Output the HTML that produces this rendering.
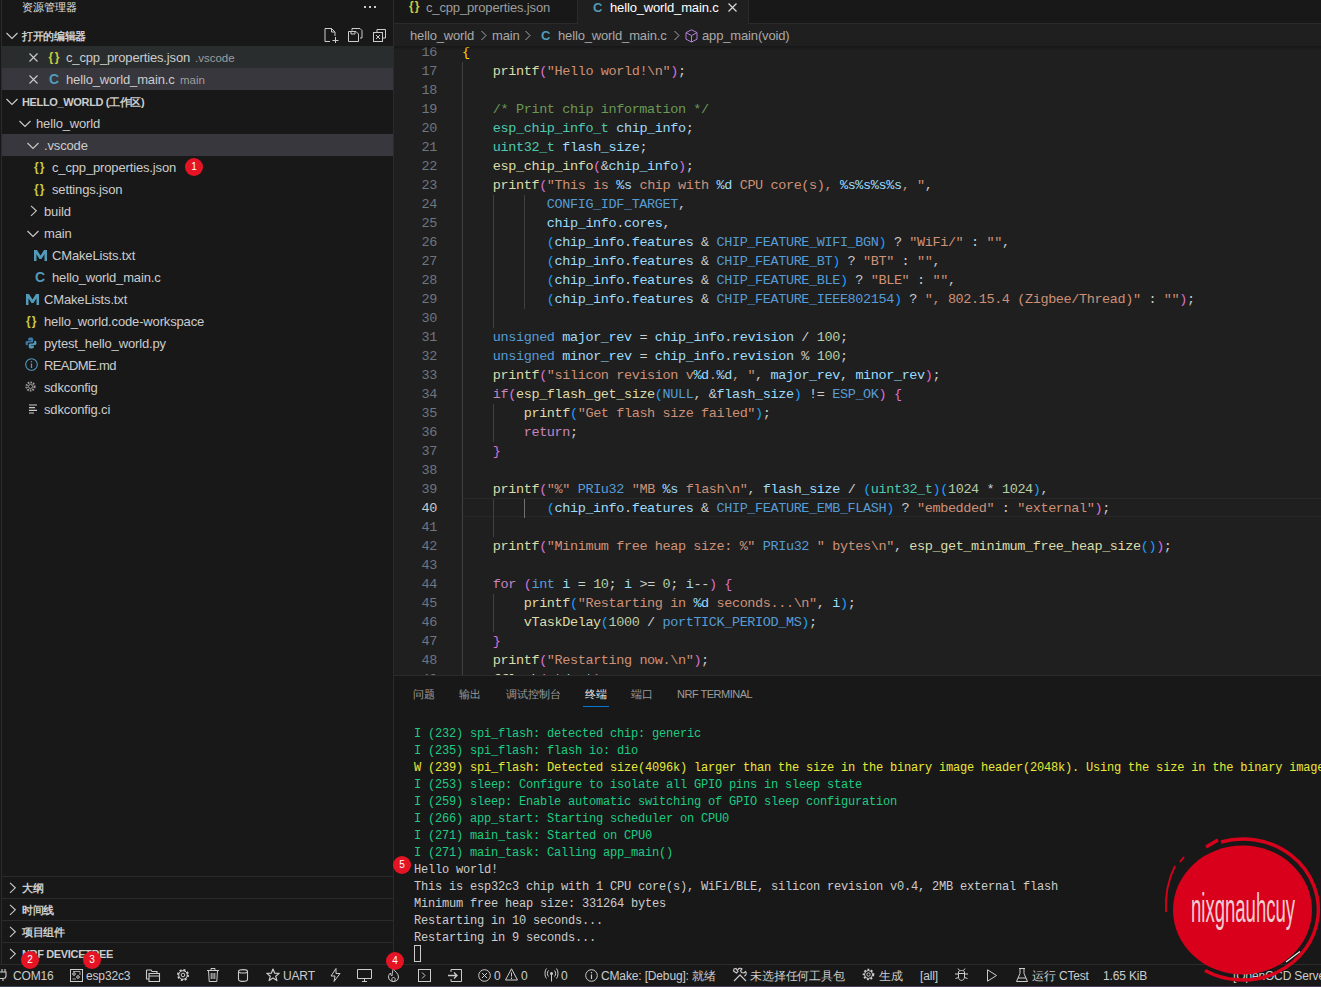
<!DOCTYPE html>
<html><head><meta charset="utf-8">
<style>
*{box-sizing:border-box;margin:0;padding:0}
html,body{width:1321px;height:987px;overflow:hidden;background:#181818}
body{position:relative;font-family:"Liberation Sans",sans-serif;color:#CCCCCC;font-size:13px}
.a{position:absolute}
.t{position:absolute;white-space:pre;line-height:22px;height:22px}
.row{position:absolute;left:2px;width:391px;height:22px}
.hdr{font-weight:bold;font-size:11px;letter-spacing:-0.35px;margin-top:1px}
.ln{position:absolute;left:394px;width:43px;text-align:right;height:19px;line-height:19px;font-family:"Liberation Mono",monospace;font-size:13.5px;letter-spacing:-0.39px}
.cl{position:absolute;left:462px;height:19px;line-height:19px;white-space:pre;font-family:"Liberation Mono",monospace;font-size:13.5px;letter-spacing:-0.39px}
.ig{position:absolute;width:1px;height:19px}
.tl{position:absolute;left:414px;height:17px;line-height:17px;white-space:pre;font-family:"Liberation Mono",monospace;font-size:12px;letter-spacing:-0.2px}
.sb{position:absolute;top:965px;height:23px;line-height:23px;font-size:12px;letter-spacing:-0.15px;white-space:pre;color:#CCCCCC}
.badge{position:absolute;width:18px;height:18px;border-radius:50%;background:#E51425;color:#fff;font-size:10px;line-height:18px;text-align:center}
svg{position:absolute;overflow:visible}
</style></head><body>

<!-- ============ SIDEBAR ============ -->
<div class="a" style="left:1px;top:0;width:1px;height:964px;background:#2B2B2B"></div>
<div class="a" style="left:393px;top:0;width:1px;height:964px;background:#2B2B2B"></div>

<div class="t" style="left:22px;top:-4px;font-size:11px;color:#E0E0E0">资源管理器</div>
<div class="a" style="left:364px;top:6px;width:2px;height:2px;background:#ccc"></div>
<div class="a" style="left:369px;top:6px;width:2px;height:2px;background:#ccc"></div>
<div class="a" style="left:374px;top:6px;width:2px;height:2px;background:#ccc"></div>

<!-- open editors header -->
<svg style="left:6px;top:32px" width="12" height="8" viewBox="0 0 12 8"><path d="M0.5 1 L6 6.5 L11.5 1" fill="none" stroke="#ccc" stroke-width="1.1"/></svg>
<div class="t hdr" style="left:22px;top:24px">打开的编辑器</div>
<!-- new file -->
<svg style="left:324px;top:28px" width="16" height="16" viewBox="0 0 16 16"><path d="M1 0.5 H7.5 L11 4 V8 M1 0.5 V13.5 H6 M7.5 0.5 V4 H11" fill="none" stroke="#ccc" stroke-width="1"/><path d="M11.5 9 V15 M8.5 12.5 H14.5" stroke="#ccc" stroke-width="1"/></svg>
<!-- save all -->
<svg style="left:348px;top:28px" width="15" height="15" viewBox="0 0 15 15"><path d="M4 2.5 V0.5 H12 L14 2.5 V10 H12" fill="none" stroke="#ccc" stroke-width="1"/><path d="M0.5 3.5 H8 L10.5 6 V13.5 H0.5 Z M3 3.5 V6 H7 V3.5" fill="none" stroke="#ccc" stroke-width="1"/></svg>
<!-- close all -->
<svg style="left:373px;top:29px" width="13" height="13" viewBox="0 0 13 13"><path d="M4 3 V0.5 H12.5 V9 H10" fill="none" stroke="#ccc" stroke-width="1"/><rect x="0.5" y="3.5" width="9" height="9" fill="none" stroke="#ccc" stroke-width="1"/><path d="M3 6 L7 10 M7 6 L3 10" stroke="#ccc" stroke-width="1"/></svg>

<div class="row" style="top:46px;background:#2A2D2E"></div>
<div class="row" style="top:68px;background:#37373D"></div>
<svg style="left:29px;top:53px" width="9" height="9" viewBox="0 0 9 9"><path d="M0.5 0.5 L8.5 8.5 M8.5 0.5 L0.5 8.5" stroke="#ccc" stroke-width="1.1"/></svg>
<svg style="left:29px;top:75px" width="9" height="9" viewBox="0 0 9 9"><path d="M0.5 0.5 L8.5 8.5 M8.5 0.5 L0.5 8.5" stroke="#ccc" stroke-width="1.1"/></svg>
<div class="t" style="left:48.5px;top:46px;font-size:12px;font-weight:bold;color:#CBCB41;letter-spacing:1.5px">{}</div>
<div class="t" style="letter-spacing:-0.15px;left:66px;top:47px">c_cpp_properties.json</div>
<div class="t" style="left:195px;top:47px;font-size:11.5px;color:#9D9D9D">.vscode</div>
<div class="t" style="left:49px;top:68px;font-size:14px;font-weight:bold;color:#519ABA">C</div>
<div class="t" style="letter-spacing:-0.15px;left:66px;top:69px">hello_world_main.c</div>
<div class="t" style="left:180px;top:69px;font-size:11.5px;color:#9D9D9D">main</div>

<!-- workspace -->
<svg style="left:6px;top:98px" width="12" height="8" viewBox="0 0 12 8"><path d="M0.5 1 L6 6.5 L11.5 1" fill="none" stroke="#ccc" stroke-width="1.1"/></svg>
<div class="t hdr" style="left:22px;top:90px">HELLO_WORLD (工作区)</div>

<svg style="left:19px;top:120px" width="12" height="8" viewBox="0 0 12 8"><path d="M0.5 1 L6 6.5 L11.5 1" fill="none" stroke="#ccc" stroke-width="1.1"/></svg>
<div class="t" style="letter-spacing:-0.15px;left:36px;top:113px">hello_world</div>

<div class="row" style="top:134px;background:#37373D"></div>
<svg style="left:27px;top:142px" width="12" height="8" viewBox="0 0 12 8"><path d="M0.5 1 L6 6.5 L11.5 1" fill="none" stroke="#ccc" stroke-width="1.1"/></svg>
<div class="t" style="letter-spacing:-0.15px;left:44px;top:135px">.vscode</div>

<div class="t" style="left:34px;top:156px;font-size:12px;font-weight:bold;color:#CBCB41;letter-spacing:1px">{}</div>
<div class="t" style="letter-spacing:-0.15px;left:52px;top:157px">c_cpp_properties.json</div>
<div class="badge" style="left:185px;top:158px">1</div>
<div class="t" style="left:34px;top:178px;font-size:12px;font-weight:bold;color:#CBCB41;letter-spacing:1px">{}</div>
<div class="t" style="letter-spacing:-0.15px;left:52px;top:179px">settings.json</div>

<svg style="left:30px;top:205px" width="8" height="12" viewBox="0 0 8 12"><path d="M1 0.8 L6.3 5.8 L1 10.8" fill="none" stroke="#ccc" stroke-width="1.1"/></svg>
<div class="t" style="letter-spacing:-0.15px;left:44px;top:201px">build</div>
<svg style="left:27px;top:230px" width="12" height="8" viewBox="0 0 12 8"><path d="M0.5 1 L6 6.5 L11.5 1" fill="none" stroke="#ccc" stroke-width="1.1"/></svg>
<div class="t" style="letter-spacing:-0.15px;left:44px;top:223px">main</div>

<svg style="left:33.5px;top:249.5px" width="13" height="11" viewBox="0 0 13 11"><path d="M0 11 V0 H3 L6.5 5.6 L10 0 H13 V11 H10.5 V4.2 L7.5 9 H5.5 L2.5 4.2 V11 Z" fill="#519ABA"/></svg>
<div class="t" style="letter-spacing:-0.15px;left:52px;top:245px">CMakeLists.txt</div>
<div class="t" style="left:35px;top:266px;font-size:14px;font-weight:bold;color:#519ABA">C</div>
<div class="t" style="letter-spacing:-0.15px;left:52px;top:267px">hello_world_main.c</div>
<svg style="left:25.5px;top:293.5px" width="13" height="11" viewBox="0 0 13 11"><path d="M0 11 V0 H3 L6.5 5.6 L10 0 H13 V11 H10.5 V4.2 L7.5 9 H5.5 L2.5 4.2 V11 Z" fill="#519ABA"/></svg>
<div class="t" style="letter-spacing:-0.15px;left:44px;top:289px">CMakeLists.txt</div>
<div class="t" style="left:26px;top:310px;font-size:12px;font-weight:bold;color:#CBCB41;letter-spacing:1px">{}</div>
<div class="t" style="letter-spacing:-0.15px;left:44px;top:311px">hello_world.code-workspace</div>
<!-- python -->
<svg style="left:25px;top:337px" width="12" height="12" viewBox="0 0 12 12"><path d="M6 0.5 C3 0.5 3.2 1.8 3.2 1.8 V3.5 H6.2 V4 H2 C2 4 0.5 3.9 0.5 6.1 C0.5 8.4 1.8 8.3 1.8 8.3 H2.8 V6.9 C2.8 6.9 2.7 5.6 4.1 5.6 H6.8 C6.8 5.6 8.2 5.6 8.2 4.3 V2 C8.2 2 8.4 0.5 6 0.5 Z" fill="#3C78AA"/><path d="M6 11.5 C9 11.5 8.8 10.2 8.8 10.2 V8.5 H5.8 V8 H10 C10 8 11.5 8.1 11.5 5.9 C11.5 3.6 10.2 3.7 10.2 3.7 H9.2 V5.1 C9.2 5.1 9.3 6.4 7.9 6.4 H5.2 C5.2 6.4 3.8 6.4 3.8 7.7 V10 C3.8 10 3.6 11.5 6 11.5 Z" fill="#519ABA"/></svg>
<div class="t" style="letter-spacing:-0.15px;left:44px;top:333px">pytest_hello_world.py</div>
<!-- info -->
<svg style="left:25px;top:358px" width="13" height="13" viewBox="0 0 13 13"><circle cx="6.5" cy="6.5" r="5.8" fill="none" stroke="#519ABA" stroke-width="1.1"/><path d="M6.5 5.5 V10 M6.5 3 V4.2" stroke="#519ABA" stroke-width="1.3"/></svg>
<div class="t" style="letter-spacing:-0.6px;left:44px;top:355px">README.md</div>
<!-- gear -->
<svg style="left:24px;top:380px" width="13" height="13" viewBox="0 0 13 13"><circle cx="6.5" cy="6.5" r="4" fill="none" stroke="#9A9A9A" stroke-width="2.2" stroke-dasharray="1.6 1"/><circle cx="6.5" cy="6.5" r="2" fill="none" stroke="#9A9A9A" stroke-width="1"/></svg>
<div class="t" style="letter-spacing:-0.15px;left:44px;top:377px">sdkconfig</div>
<!-- lines -->
<svg style="left:29px;top:404px" width="10" height="10" viewBox="0 0 10 10"><path d="M0 1 H8 M0 3.7 H6 M0 6.3 H8 M0 9 H5" stroke="#ccc" stroke-width="1.2"/></svg>
<div class="t" style="letter-spacing:-0.15px;left:44px;top:399px">sdkconfig.ci</div>

<!-- bottom sections -->
<div class="a" style="left:2px;top:876px;width:391px;height:1px;background:#2B2B2B"></div>
<div class="a" style="left:2px;top:898px;width:391px;height:1px;background:#2B2B2B"></div>
<div class="a" style="left:2px;top:920px;width:391px;height:1px;background:#2B2B2B"></div>
<div class="a" style="left:2px;top:942px;width:391px;height:1px;background:#2B2B2B"></div>
<svg style="left:9px;top:882px" width="8" height="12" viewBox="0 0 8 12"><path d="M1 0.8 L6.3 5.8 L1 10.8" fill="none" stroke="#ccc" stroke-width="1.1"/></svg>
<div class="t hdr" style="left:22px;top:876px">大纲</div>
<svg style="left:9px;top:904px" width="8" height="12" viewBox="0 0 8 12"><path d="M1 0.8 L6.3 5.8 L1 10.8" fill="none" stroke="#ccc" stroke-width="1.1"/></svg>
<div class="t hdr" style="left:22px;top:898px">时间线</div>
<svg style="left:9px;top:926px" width="8" height="12" viewBox="0 0 8 12"><path d="M1 0.8 L6.3 5.8 L1 10.8" fill="none" stroke="#ccc" stroke-width="1.1"/></svg>
<div class="t hdr" style="left:22px;top:920px">项目组件</div>
<svg style="left:9px;top:948px" width="8" height="12" viewBox="0 0 8 12"><path d="M1 0.8 L6.3 5.8 L1 10.8" fill="none" stroke="#ccc" stroke-width="1.1"/></svg>
<div class="t hdr" style="left:22px;top:942px">NRF DEVICETREE</div>

<!-- ============ EDITOR ============ -->
<div class="a" style="left:394px;top:0;width:927px;height:24px;background:#181818"></div>
<div class="a" style="left:394px;top:23px;width:927px;height:1px;background:#2B2B2B"></div>
<div class="a" style="left:577px;top:0;width:1px;height:24px;background:#2B2B2B"></div>
<div class="a" style="left:578px;top:0;width:170px;height:24px;background:#1F1F1F"></div>
<div class="a" style="left:748px;top:0;width:1px;height:24px;background:#2B2B2B"></div>
<div class="t" style="left:409px;top:-5px;font-size:12px;font-weight:bold;color:#CBCB41;letter-spacing:1px">{}</div>
<div class="t" style="letter-spacing:-0.15px;left:426px;top:-3px;color:#9D9D9D">c_cpp_properties.json</div>
<div class="t" style="left:593px;top:-3px;font-weight:bold;color:#519ABA">C</div>
<div class="t" style="letter-spacing:-0.15px;left:610px;top:-3px;color:#FFFFFF">hello_world_main.c</div>
<svg style="left:728px;top:3px" width="9" height="9" viewBox="0 0 9 9"><path d="M0.5 0.5 L8.5 8.5 M8.5 0.5 L0.5 8.5" stroke="#ddd" stroke-width="1.1"/></svg>

<!-- editor body -->
<div class="a" style="left:394px;top:46px;width:927px;height:629px;background:#1F1F1F;overflow:hidden" id="ed"></div>
<div class="a" style="left:462px;top:497.5px;width:859px;height:19px;border-top:1px solid #282828;border-bottom:1px solid #282828"></div>
<div class="ln" style="top:42.5px;color:#6E7681">16</div>
<div class="cl" style="top:42.5px"><span style="color:#FFD700">{</span></div>
<div class="ln" style="top:61.5px;color:#6E7681">17</div>
<div class="ig" style="top:61.5px;left:462.0px;background:#404040"></div>
<div class="cl" style="top:61.5px"><span style="color:#CCCCCC">    </span><span style="color:#DCDCAA">printf</span><span style="color:#DA70D6">(</span><span style="color:#CE9178">&quot;Hello world!\n&quot;</span><span style="color:#DA70D6">)</span><span style="color:#CCCCCC">;</span></div>
<div class="ln" style="top:80.5px;color:#6E7681">18</div>
<div class="ig" style="top:80.5px;left:462.0px;background:#404040"></div>
<div class="cl" style="top:80.5px"></div>
<div class="ln" style="top:99.5px;color:#6E7681">19</div>
<div class="ig" style="top:99.5px;left:462.0px;background:#404040"></div>
<div class="cl" style="top:99.5px"><span style="color:#CCCCCC">    </span><span style="color:#6A9955">/* Print chip information */</span></div>
<div class="ln" style="top:118.5px;color:#6E7681">20</div>
<div class="ig" style="top:118.5px;left:462.0px;background:#404040"></div>
<div class="cl" style="top:118.5px"><span style="color:#CCCCCC">    </span><span style="color:#4EC9B0">esp_chip_info_t</span><span style="color:#CCCCCC"> </span><span style="color:#9CDCFE">chip_info</span><span style="color:#CCCCCC">;</span></div>
<div class="ln" style="top:137.5px;color:#6E7681">21</div>
<div class="ig" style="top:137.5px;left:462.0px;background:#404040"></div>
<div class="cl" style="top:137.5px"><span style="color:#CCCCCC">    </span><span style="color:#4EC9B0">uint32_t</span><span style="color:#CCCCCC"> </span><span style="color:#9CDCFE">flash_size</span><span style="color:#CCCCCC">;</span></div>
<div class="ln" style="top:156.5px;color:#6E7681">22</div>
<div class="ig" style="top:156.5px;left:462.0px;background:#404040"></div>
<div class="cl" style="top:156.5px"><span style="color:#CCCCCC">    </span><span style="color:#DCDCAA">esp_chip_info</span><span style="color:#DA70D6">(</span><span style="color:#CCCCCC">&amp;</span><span style="color:#9CDCFE">chip_info</span><span style="color:#DA70D6">)</span><span style="color:#CCCCCC">;</span></div>
<div class="ln" style="top:175.5px;color:#6E7681">23</div>
<div class="ig" style="top:175.5px;left:462.0px;background:#404040"></div>
<div class="cl" style="top:175.5px"><span style="color:#CCCCCC">    </span><span style="color:#DCDCAA">printf</span><span style="color:#DA70D6">(</span><span style="color:#CE9178">&quot;This is </span><span style="color:#9CDCFE">%s</span><span style="color:#CE9178"> chip with </span><span style="color:#9CDCFE">%d</span><span style="color:#CE9178"> CPU core(s), </span><span style="color:#9CDCFE">%s%s%s%s</span><span style="color:#CE9178">, &quot;</span><span style="color:#CCCCCC">,</span></div>
<div class="ln" style="top:194.5px;color:#6E7681">24</div>
<div class="ig" style="top:194.5px;left:462.0px;background:#404040"></div>
<div class="ig" style="top:194.5px;left:492.8px;background:#404040"></div>
<div class="ig" style="top:194.5px;left:523.7px;background:#404040"></div>
<div class="cl" style="top:194.5px"><span style="color:#CCCCCC">           </span><span style="color:#569CD6">CONFIG_IDF_TARGET</span><span style="color:#CCCCCC">,</span></div>
<div class="ln" style="top:213.5px;color:#6E7681">25</div>
<div class="ig" style="top:213.5px;left:462.0px;background:#404040"></div>
<div class="ig" style="top:213.5px;left:492.8px;background:#404040"></div>
<div class="ig" style="top:213.5px;left:523.7px;background:#404040"></div>
<div class="cl" style="top:213.5px"><span style="color:#CCCCCC">           </span><span style="color:#9CDCFE">chip_info</span><span style="color:#CCCCCC">.</span><span style="color:#9CDCFE">cores</span><span style="color:#CCCCCC">,</span></div>
<div class="ln" style="top:232.5px;color:#6E7681">26</div>
<div class="ig" style="top:232.5px;left:462.0px;background:#404040"></div>
<div class="ig" style="top:232.5px;left:492.8px;background:#404040"></div>
<div class="ig" style="top:232.5px;left:523.7px;background:#404040"></div>
<div class="cl" style="top:232.5px"><span style="color:#CCCCCC">           </span><span style="color:#179FFF">(</span><span style="color:#9CDCFE">chip_info</span><span style="color:#CCCCCC">.</span><span style="color:#9CDCFE">features</span><span style="color:#CCCCCC"> &amp; </span><span style="color:#569CD6">CHIP_FEATURE_WIFI_BGN</span><span style="color:#179FFF">)</span><span style="color:#CCCCCC"> ? </span><span style="color:#CE9178">&quot;WiFi/&quot;</span><span style="color:#CCCCCC"> : </span><span style="color:#CE9178">&quot;&quot;</span><span style="color:#CCCCCC">,</span></div>
<div class="ln" style="top:251.5px;color:#6E7681">27</div>
<div class="ig" style="top:251.5px;left:462.0px;background:#404040"></div>
<div class="ig" style="top:251.5px;left:492.8px;background:#404040"></div>
<div class="ig" style="top:251.5px;left:523.7px;background:#404040"></div>
<div class="cl" style="top:251.5px"><span style="color:#CCCCCC">           </span><span style="color:#179FFF">(</span><span style="color:#9CDCFE">chip_info</span><span style="color:#CCCCCC">.</span><span style="color:#9CDCFE">features</span><span style="color:#CCCCCC"> &amp; </span><span style="color:#569CD6">CHIP_FEATURE_BT</span><span style="color:#179FFF">)</span><span style="color:#CCCCCC"> ? </span><span style="color:#CE9178">&quot;BT&quot;</span><span style="color:#CCCCCC"> : </span><span style="color:#CE9178">&quot;&quot;</span><span style="color:#CCCCCC">,</span></div>
<div class="ln" style="top:270.5px;color:#6E7681">28</div>
<div class="ig" style="top:270.5px;left:462.0px;background:#404040"></div>
<div class="ig" style="top:270.5px;left:492.8px;background:#404040"></div>
<div class="ig" style="top:270.5px;left:523.7px;background:#404040"></div>
<div class="cl" style="top:270.5px"><span style="color:#CCCCCC">           </span><span style="color:#179FFF">(</span><span style="color:#9CDCFE">chip_info</span><span style="color:#CCCCCC">.</span><span style="color:#9CDCFE">features</span><span style="color:#CCCCCC"> &amp; </span><span style="color:#569CD6">CHIP_FEATURE_BLE</span><span style="color:#179FFF">)</span><span style="color:#CCCCCC"> ? </span><span style="color:#CE9178">&quot;BLE&quot;</span><span style="color:#CCCCCC"> : </span><span style="color:#CE9178">&quot;&quot;</span><span style="color:#CCCCCC">,</span></div>
<div class="ln" style="top:289.5px;color:#6E7681">29</div>
<div class="ig" style="top:289.5px;left:462.0px;background:#404040"></div>
<div class="ig" style="top:289.5px;left:492.8px;background:#404040"></div>
<div class="ig" style="top:289.5px;left:523.7px;background:#404040"></div>
<div class="cl" style="top:289.5px"><span style="color:#CCCCCC">           </span><span style="color:#179FFF">(</span><span style="color:#9CDCFE">chip_info</span><span style="color:#CCCCCC">.</span><span style="color:#9CDCFE">features</span><span style="color:#CCCCCC"> &amp; </span><span style="color:#569CD6">CHIP_FEATURE_IEEE802154</span><span style="color:#179FFF">)</span><span style="color:#CCCCCC"> ? </span><span style="color:#CE9178">&quot;, 802.15.4 (Zigbee/Thread)&quot;</span><span style="color:#CCCCCC"> : </span><span style="color:#CE9178">&quot;&quot;</span><span style="color:#DA70D6">)</span><span style="color:#CCCCCC">;</span></div>
<div class="ln" style="top:308.5px;color:#6E7681">30</div>
<div class="ig" style="top:308.5px;left:462.0px;background:#404040"></div>
<div class="ig" style="top:308.5px;left:492.8px;background:#404040"></div>
<div class="cl" style="top:308.5px"></div>
<div class="ln" style="top:327.5px;color:#6E7681">31</div>
<div class="ig" style="top:327.5px;left:462.0px;background:#404040"></div>
<div class="cl" style="top:327.5px"><span style="color:#CCCCCC">    </span><span style="color:#569CD6">unsigned</span><span style="color:#CCCCCC"> </span><span style="color:#9CDCFE">major_rev</span><span style="color:#CCCCCC"> = </span><span style="color:#9CDCFE">chip_info</span><span style="color:#CCCCCC">.</span><span style="color:#9CDCFE">revision</span><span style="color:#CCCCCC"> / </span><span style="color:#B5CEA8">100</span><span style="color:#CCCCCC">;</span></div>
<div class="ln" style="top:346.5px;color:#6E7681">32</div>
<div class="ig" style="top:346.5px;left:462.0px;background:#404040"></div>
<div class="cl" style="top:346.5px"><span style="color:#CCCCCC">    </span><span style="color:#569CD6">unsigned</span><span style="color:#CCCCCC"> </span><span style="color:#9CDCFE">minor_rev</span><span style="color:#CCCCCC"> = </span><span style="color:#9CDCFE">chip_info</span><span style="color:#CCCCCC">.</span><span style="color:#9CDCFE">revision</span><span style="color:#CCCCCC"> % </span><span style="color:#B5CEA8">100</span><span style="color:#CCCCCC">;</span></div>
<div class="ln" style="top:365.5px;color:#6E7681">33</div>
<div class="ig" style="top:365.5px;left:462.0px;background:#404040"></div>
<div class="cl" style="top:365.5px"><span style="color:#CCCCCC">    </span><span style="color:#DCDCAA">printf</span><span style="color:#DA70D6">(</span><span style="color:#CE9178">&quot;silicon revision v</span><span style="color:#9CDCFE">%d</span><span style="color:#CE9178">.</span><span style="color:#9CDCFE">%d</span><span style="color:#CE9178">, &quot;</span><span style="color:#CCCCCC">, </span><span style="color:#9CDCFE">major_rev</span><span style="color:#CCCCCC">, </span><span style="color:#9CDCFE">minor_rev</span><span style="color:#DA70D6">)</span><span style="color:#CCCCCC">;</span></div>
<div class="ln" style="top:384.5px;color:#6E7681">34</div>
<div class="ig" style="top:384.5px;left:462.0px;background:#404040"></div>
<div class="cl" style="top:384.5px"><span style="color:#CCCCCC">    </span><span style="color:#C586C0">if</span><span style="color:#DA70D6">(</span><span style="color:#DCDCAA">esp_flash_get_size</span><span style="color:#179FFF">(</span><span style="color:#569CD6">NULL</span><span style="color:#CCCCCC">, &amp;</span><span style="color:#9CDCFE">flash_size</span><span style="color:#179FFF">)</span><span style="color:#CCCCCC"> != </span><span style="color:#569CD6">ESP_OK</span><span style="color:#DA70D6">)</span><span style="color:#CCCCCC"> </span><span style="color:#DA70D6">{</span></div>
<div class="ln" style="top:403.5px;color:#6E7681">35</div>
<div class="ig" style="top:403.5px;left:462.0px;background:#404040"></div>
<div class="ig" style="top:403.5px;left:492.8px;background:#404040"></div>
<div class="cl" style="top:403.5px"><span style="color:#CCCCCC">        </span><span style="color:#DCDCAA">printf</span><span style="color:#179FFF">(</span><span style="color:#CE9178">&quot;Get flash size failed&quot;</span><span style="color:#179FFF">)</span><span style="color:#CCCCCC">;</span></div>
<div class="ln" style="top:422.5px;color:#6E7681">36</div>
<div class="ig" style="top:422.5px;left:462.0px;background:#404040"></div>
<div class="ig" style="top:422.5px;left:492.8px;background:#404040"></div>
<div class="cl" style="top:422.5px"><span style="color:#CCCCCC">        </span><span style="color:#C586C0">return</span><span style="color:#CCCCCC">;</span></div>
<div class="ln" style="top:441.5px;color:#6E7681">37</div>
<div class="ig" style="top:441.5px;left:462.0px;background:#404040"></div>
<div class="cl" style="top:441.5px"><span style="color:#CCCCCC">    </span><span style="color:#DA70D6">}</span></div>
<div class="ln" style="top:460.5px;color:#6E7681">38</div>
<div class="ig" style="top:460.5px;left:462.0px;background:#404040"></div>
<div class="cl" style="top:460.5px"></div>
<div class="ln" style="top:479.5px;color:#6E7681">39</div>
<div class="ig" style="top:479.5px;left:462.0px;background:#404040"></div>
<div class="cl" style="top:479.5px"><span style="color:#CCCCCC">    </span><span style="color:#DCDCAA">printf</span><span style="color:#DA70D6">(</span><span style="color:#CE9178">&quot;%&quot;</span><span style="color:#CCCCCC"> </span><span style="color:#569CD6">PRIu32</span><span style="color:#CCCCCC"> </span><span style="color:#CE9178">&quot;MB </span><span style="color:#9CDCFE">%s</span><span style="color:#CE9178"> flash\n&quot;</span><span style="color:#CCCCCC">, </span><span style="color:#9CDCFE">flash_size</span><span style="color:#CCCCCC"> / </span><span style="color:#179FFF">(</span><span style="color:#4EC9B0">uint32_t</span><span style="color:#179FFF">)</span><span style="color:#179FFF">(</span><span style="color:#B5CEA8">1024</span><span style="color:#CCCCCC"> * </span><span style="color:#B5CEA8">1024</span><span style="color:#179FFF">)</span><span style="color:#CCCCCC">,</span></div>
<div class="ln" style="top:498.5px;color:#CCCCCC">40</div>
<div class="ig" style="top:498.5px;left:462.0px;background:#404040"></div>
<div class="ig" style="top:498.5px;left:492.8px;background:#404040"></div>
<div class="ig" style="top:498.5px;left:523.7px;background:#707070"></div>
<div class="cl" style="top:498.5px"><span style="color:#CCCCCC">           </span><span style="color:#179FFF">(</span><span style="color:#9CDCFE">chip_info</span><span style="color:#CCCCCC">.</span><span style="color:#9CDCFE">features</span><span style="color:#CCCCCC"> &amp; </span><span style="color:#569CD6">CHIP_FEATURE_EMB_FLASH</span><span style="color:#179FFF">)</span><span style="color:#CCCCCC"> ? </span><span style="color:#CE9178">&quot;embedded&quot;</span><span style="color:#CCCCCC"> : </span><span style="color:#CE9178">&quot;external&quot;</span><span style="color:#DA70D6">)</span><span style="color:#CCCCCC">;</span></div>
<div class="ln" style="top:517.5px;color:#6E7681">41</div>
<div class="ig" style="top:517.5px;left:462.0px;background:#404040"></div>
<div class="ig" style="top:517.5px;left:492.8px;background:#404040"></div>
<div class="cl" style="top:517.5px"></div>
<div class="ln" style="top:536.5px;color:#6E7681">42</div>
<div class="ig" style="top:536.5px;left:462.0px;background:#404040"></div>
<div class="cl" style="top:536.5px"><span style="color:#CCCCCC">    </span><span style="color:#DCDCAA">printf</span><span style="color:#DA70D6">(</span><span style="color:#CE9178">&quot;Minimum free heap size: %&quot;</span><span style="color:#CCCCCC"> </span><span style="color:#569CD6">PRIu32</span><span style="color:#CCCCCC"> </span><span style="color:#CE9178">&quot; bytes\n&quot;</span><span style="color:#CCCCCC">, </span><span style="color:#DCDCAA">esp_get_minimum_free_heap_size</span><span style="color:#179FFF">(</span><span style="color:#179FFF">)</span><span style="color:#DA70D6">)</span><span style="color:#CCCCCC">;</span></div>
<div class="ln" style="top:555.5px;color:#6E7681">43</div>
<div class="ig" style="top:555.5px;left:462.0px;background:#404040"></div>
<div class="cl" style="top:555.5px"></div>
<div class="ln" style="top:574.5px;color:#6E7681">44</div>
<div class="ig" style="top:574.5px;left:462.0px;background:#404040"></div>
<div class="cl" style="top:574.5px"><span style="color:#CCCCCC">    </span><span style="color:#C586C0">for</span><span style="color:#CCCCCC"> </span><span style="color:#DA70D6">(</span><span style="color:#569CD6">int</span><span style="color:#CCCCCC"> </span><span style="color:#9CDCFE">i</span><span style="color:#CCCCCC"> = </span><span style="color:#B5CEA8">10</span><span style="color:#CCCCCC">; </span><span style="color:#9CDCFE">i</span><span style="color:#CCCCCC"> &gt;= </span><span style="color:#B5CEA8">0</span><span style="color:#CCCCCC">; </span><span style="color:#9CDCFE">i</span><span style="color:#CCCCCC">--</span><span style="color:#DA70D6">)</span><span style="color:#CCCCCC"> </span><span style="color:#DA70D6">{</span></div>
<div class="ln" style="top:593.5px;color:#6E7681">45</div>
<div class="ig" style="top:593.5px;left:462.0px;background:#404040"></div>
<div class="ig" style="top:593.5px;left:492.8px;background:#404040"></div>
<div class="cl" style="top:593.5px"><span style="color:#CCCCCC">        </span><span style="color:#DCDCAA">printf</span><span style="color:#179FFF">(</span><span style="color:#CE9178">&quot;Restarting in </span><span style="color:#9CDCFE">%d</span><span style="color:#CE9178"> seconds...\n&quot;</span><span style="color:#CCCCCC">, </span><span style="color:#9CDCFE">i</span><span style="color:#179FFF">)</span><span style="color:#CCCCCC">;</span></div>
<div class="ln" style="top:612.5px;color:#6E7681">46</div>
<div class="ig" style="top:612.5px;left:462.0px;background:#404040"></div>
<div class="ig" style="top:612.5px;left:492.8px;background:#404040"></div>
<div class="cl" style="top:612.5px"><span style="color:#CCCCCC">        </span><span style="color:#DCDCAA">vTaskDelay</span><span style="color:#179FFF">(</span><span style="color:#B5CEA8">1000</span><span style="color:#CCCCCC"> / </span><span style="color:#569CD6">portTICK_PERIOD_MS</span><span style="color:#179FFF">)</span><span style="color:#CCCCCC">;</span></div>
<div class="ln" style="top:631.5px;color:#6E7681">47</div>
<div class="ig" style="top:631.5px;left:462.0px;background:#404040"></div>
<div class="cl" style="top:631.5px"><span style="color:#CCCCCC">    </span><span style="color:#DA70D6">}</span></div>
<div class="ln" style="top:650.5px;color:#6E7681">48</div>
<div class="ig" style="top:650.5px;left:462.0px;background:#404040"></div>
<div class="cl" style="top:650.5px"><span style="color:#CCCCCC">    </span><span style="color:#DCDCAA">printf</span><span style="color:#DA70D6">(</span><span style="color:#CE9178">&quot;Restarting now.\n&quot;</span><span style="color:#DA70D6">)</span><span style="color:#CCCCCC">;</span></div>
<div class="ln" style="top:669.5px;color:#6E7681">49</div>
<div class="ig" style="top:669.5px;left:462.0px;background:#404040"></div>
<div class="cl" style="top:669.5px"><span style="color:#CCCCCC">    </span><span style="color:#DCDCAA">fflush</span><span style="color:#DA70D6">(</span><span style="color:#9CDCFE">stdout</span><span style="color:#DA70D6">)</span><span style="color:#CCCCCC">;</span></div>
<div class="a" style="left:394px;top:46px;width:927px;height:4px;background:linear-gradient(#0d0d0d80,#1f1f1f00)"></div>
<!-- breadcrumbs -->
<div class="a" style="left:394px;top:24px;width:927px;height:22px;background:#1F1F1F"></div>
<div class="t" style="letter-spacing:-0.15px;left:410px;top:25px;color:#A9A9A9">hello_world</div>
<svg style="left:480px;top:30px" width="8" height="12" viewBox="0 0 8 12"><path d="M1.5 1 L6 5.5 L1.5 10" fill="none" stroke="#A9A9A9" stroke-width="1"/></svg>
<div class="t" style="letter-spacing:-0.15px;left:492px;top:25px;color:#A9A9A9">main</div>
<svg style="left:524px;top:30px" width="8" height="12" viewBox="0 0 8 12"><path d="M1.5 1 L6 5.5 L1.5 10" fill="none" stroke="#A9A9A9" stroke-width="1"/></svg>
<div class="t" style="left:541px;top:25px;font-weight:bold;color:#519ABA">C</div>
<div class="t" style="letter-spacing:-0.15px;left:558px;top:25px;color:#A9A9A9">hello_world_main.c</div>
<svg style="left:673px;top:30px" width="8" height="12" viewBox="0 0 8 12"><path d="M1.5 1 L6 5.5 L1.5 10" fill="none" stroke="#A9A9A9" stroke-width="1"/></svg>
<svg style="left:685px;top:29px" width="13" height="14" viewBox="0 0 13 14"><path d="M6.5 0.8 L12 3.6 V10.2 L6.5 13 L1 10.2 V3.6 Z M1 3.6 L6.5 6.6 L12 3.6 M6.5 6.6 V13" fill="none" stroke="#B180D7" stroke-width="1"/></svg>
<div class="t" style="letter-spacing:-0.15px;left:702px;top:25px;color:#A9A9A9">app_main(void)</div>


<!-- ============ PANEL ============ -->
<div class="a" style="left:394px;top:675px;width:927px;height:289px;background:#181818;border-top:1px solid #2B2B2B"></div>
<div class="t" style="left:413px;top:683px;font-size:11px;color:#9D9D9D">问题</div>
<div class="t" style="left:459px;top:683px;font-size:11px;color:#9D9D9D">输出</div>
<div class="t" style="left:506px;top:683px;font-size:11px;color:#9D9D9D">调试控制台</div>
<div class="t" style="left:585px;top:683px;font-size:11px;color:#E7E7E7">终端</div>
<div class="a" style="left:583px;top:706px;width:26px;height:1px;background:#0078D4"></div>
<div class="t" style="left:631px;top:683px;font-size:11px;color:#9D9D9D">端口</div>
<div class="t" style="left:677px;top:683px;font-size:11px;letter-spacing:-0.5px;color:#9D9D9D">NRF TERMINAL</div>
<div class="tl" style="top:725.5px;color:#1FCB84">I (232) spi_flash: detected chip: generic</div>
<div class="tl" style="top:742.5px;color:#1FCB84">I (235) spi_flash: flash io: dio</div>
<div class="tl" style="top:759.5px;color:#E8E83A">W (239) spi_flash: Detected size(4096k) larger than the size in the binary image header(2048k). Using the size in the binary image header.</div>
<div class="tl" style="top:776.5px;color:#1FCB84">I (253) sleep: Configure to isolate all GPIO pins in sleep state</div>
<div class="tl" style="top:793.5px;color:#1FCB84">I (259) sleep: Enable automatic switching of GPIO sleep configuration</div>
<div class="tl" style="top:810.5px;color:#1FCB84">I (266) app_start: Starting scheduler on CPU0</div>
<div class="tl" style="top:827.5px;color:#1FCB84">I (271) main_task: Started on CPU0</div>
<div class="tl" style="top:844.5px;color:#1FCB84">I (271) main_task: Calling app_main()</div>
<div class="tl" style="top:861.5px;color:#CCCCCC">Hello world!</div>
<div class="tl" style="top:878.5px;color:#CCCCCC">This is esp32c3 chip with 1 CPU core(s), WiFi/BLE, silicon revision v0.4, 2MB external flash</div>
<div class="tl" style="top:895.5px;color:#CCCCCC">Minimum free heap size: 331264 bytes</div>
<div class="tl" style="top:912.5px;color:#CCCCCC">Restarting in 10 seconds...</div>
<div class="tl" style="top:929.5px;color:#CCCCCC">Restarting in 9 seconds...</div>
<div class="a" style="left:414px;top:945px;width:7px;height:17px;border:1px solid #CCCCCC"></div>

<!-- ============ STATUS BAR ============ -->
<div class="a" style="left:0;top:964px;width:1321px;height:23px;background:#181818;border-top:1px solid #2B2B2B"></div>
<div class="a" style="left:0;top:986px;width:1321px;height:1px;background:linear-gradient(90deg,#3a4656,#473c58 50%,#4e3a5e)"></div>
<svg style="left:0px;top:969px" width="8" height="12" viewBox="0 0 8 12"><path d="M0 3 H6 V7 C6 8.5 5 9.5 3 9.5 H0 M3 9.5 V12 M2 0 V3 M5 0 V3" fill="none" stroke="#ccc" stroke-width="1.1"/></svg>
<div class="sb" style="left:13px">COM16</div>
<svg style="left:70px;top:969px" width="13" height="13" viewBox="0 0 13 13"><rect x="0.5" y="0.5" width="12" height="12" fill="none" stroke="#ccc" stroke-width="1"/><circle cx="4" cy="5" r="1.3" fill="none" stroke="#ccc"/><circle cx="8" cy="8" r="1.3" fill="none" stroke="#ccc"/><path d="M3 2.5 H10 V6 M2.5 10 H6" fill="none" stroke="#ccc" stroke-width="0.8"/></svg>
<div class="sb" style="left:86px">esp32c3</div>
<svg style="left:146px;top:969px" width="14" height="13" viewBox="0 0 14 13"><path d="M0.5 1 H5 L6 2.5 H11 V4.5 M0.5 1 V10 H3 M3 4.5 H13.5 V12.5 H3 Z M3 7 H13.5" fill="none" stroke="#ccc" stroke-width="1.1"/></svg>
<svg style="left:176px;top:968px" width="14" height="14" viewBox="0 0 14 14"><circle cx="7" cy="7" r="5" fill="none" stroke="#ccc" stroke-width="2" stroke-dasharray="2 1.9"/><circle cx="7" cy="7" r="4.3" fill="none" stroke="#ccc" stroke-width="1"/><circle cx="7" cy="7" r="1.8" fill="none" stroke="#ccc" stroke-width="1"/></svg>
<svg style="left:207px;top:968px" width="12" height="14" viewBox="0 0 12 14"><path d="M0 2.5 H12 M4 2.5 V0.5 H8 V2.5 M1.5 2.5 L2.2 13.5 H9.8 L10.5 2.5 M4.2 5 V11 M6 5 V11 M7.8 5 V11" fill="none" stroke="#ccc" stroke-width="1"/></svg>
<svg style="left:237.5px;top:969px" width="10" height="13" viewBox="0 0 10 13"><path d="M0.5 2.5 C0.5 0 9.5 0 9.5 2.5 V10.5 C9.5 13 0.5 13 0.5 10.5 Z M0.5 2.5 C0.5 4.5 9.5 4.5 9.5 2.5" fill="none" stroke="#ccc" stroke-width="1.1"/></svg>
<svg style="left:266px;top:968px" width="14" height="14" viewBox="0 0 14 14"><path d="M7 1 L8.7 5.2 L13.2 5.4 L9.7 8.2 L10.9 12.6 L7 10.1 L3.1 12.6 L4.3 8.2 L0.8 5.4 L5.3 5.2 Z" fill="none" stroke="#ccc" stroke-width="1.2" stroke-linejoin="round"/></svg>
<div class="sb" style="left:283px">UART</div>
<svg style="left:330px;top:968px" width="11" height="14" viewBox="0 0 11 14"><path d="M6 0.5 L1 8 H5 L4 13.5 L10 5.5 H6 Z" fill="none" stroke="#ccc" stroke-width="1"/></svg>
<svg style="left:357px;top:969px" width="15" height="13" viewBox="0 0 15 13"><path d="M0.5 0.5 H14.5 V9.5 H0.5 Z M5 12.5 H10 M7.5 9.5 V12.5" fill="none" stroke="#ccc" stroke-width="1"/></svg>
<svg style="left:388px;top:968px" width="11" height="14" viewBox="0 0 11 14"><path d="M5 0.5 C6 3 10.5 5 10.5 9 C10.5 12 8 13.5 5.5 13.5 C3 13.5 0.5 12 0.5 9 C0.5 7 1.5 6 2.5 5 C2.5 6.5 3 7.5 4 8 C4 5 5 3 5 0.5 Z M5.5 13.5 C4 13.5 3.5 12 4 10.5 L5.5 9 L7 10.5 C7.5 12 7 13.5 5.5 13.5" fill="none" stroke="#ccc" stroke-width="1"/></svg>
<svg style="left:418px;top:969px" width="13" height="13" viewBox="0 0 13 13"><rect x="0.5" y="0.5" width="12" height="12" fill="none" stroke="#ccc" stroke-width="1"/><path d="M4 3.5 L7 6.5 L4 9.5" fill="none" stroke="#ccc" stroke-width="1"/></svg>
<svg style="left:448px;top:969px" width="14" height="13" viewBox="0 0 14 13"><path d="M3 3 V0.5 H13.5 V12.5 H3 V10" fill="none" stroke="#ccc" stroke-width="1"/><path d="M0 6.5 H9 M6 3.5 L9 6.5 L6 9.5" fill="none" stroke="#ccc" stroke-width="1.3"/></svg>
<svg style="left:478px;top:969px" width="13" height="13" viewBox="0 0 13 13"><circle cx="6.5" cy="6.5" r="5.8" fill="none" stroke="#ccc" stroke-width="1"/><path d="M4 4 L9 9 M9 4 L4 9" stroke="#ccc" stroke-width="1"/></svg>
<div class="sb" style="left:494px">0</div>
<svg style="left:505px;top:968px" width="13" height="13" viewBox="0 0 13 13"><path d="M6.5 0.8 L12.5 12 H0.5 Z M6.5 4.5 V8.5 M6.5 9.5 V11" fill="none" stroke="#ccc" stroke-width="1"/></svg>
<div class="sb" style="left:521px">0</div>
<svg style="left:545px;top:968px" width="13" height="14" viewBox="0 0 13 14"><circle cx="6.5" cy="5.5" r="1.5" fill="#ccc"/><path d="M6.5 7 V13.5 M3.5 2.5 C2 4 2 7 3.5 8.5 M9.5 2.5 C11 4 11 7 9.5 8.5 M1.5 0.5 C-0.5 3 -0.5 8 1.5 10.5 M11.5 0.5 C13.5 3 13.5 8 11.5 10.5" fill="none" stroke="#ccc" stroke-width="1"/></svg>
<div class="sb" style="left:561px">0</div>
<svg style="left:585px;top:969px" width="13" height="13" viewBox="0 0 13 13"><circle cx="6.5" cy="6.5" r="5.8" fill="none" stroke="#ccc" stroke-width="1"/><path d="M6.5 5.5 V10 M6.5 3 V4.3" stroke="#ccc" stroke-width="1.2"/></svg>
<div class="sb" style="left:601px">CMake: [Debug]: 就绪</div>
<svg style="left:733px;top:968px" width="14" height="14" viewBox="0 0 14 14"><path d="M1 13 L7.5 6.5 M5 2 C5 0.5 7.5 -0.5 9 1 L7.5 2.5 L8.5 4.5 L11 5 L12.5 3.5 C14 5 13 8 11 8 M7 7 L13 13 M1 1 L3 0.5 L5 3.5 L3.5 5 L0.5 3 Z" fill="none" stroke="#ccc" stroke-width="1.1"/></svg>
<div class="sb" style="left:750px">未选择任何工具包</div>
<svg style="left:862px;top:968px" width="13" height="13" viewBox="0 0 13 13"><circle cx="6.5" cy="6.5" r="4.8" fill="none" stroke="#ccc" stroke-width="2" stroke-dasharray="1.8 1.7"/><circle cx="6.5" cy="6.5" r="4" fill="none" stroke="#ccc" stroke-width="1"/><circle cx="6.5" cy="6.5" r="1.7" fill="none" stroke="#ccc" stroke-width="1"/></svg>
<div class="sb" style="left:879px">生成</div>
<div class="sb" style="left:920px">[all]</div>
<svg style="left:955px;top:968px" width="13" height="14" viewBox="0 0 13 14"><path d="M3.5 4 C3.5 2 9.5 2 9.5 4 V9 C9.5 13.5 3.5 13.5 3.5 9 Z M4.5 2.5 L3 0.5 M8.5 2.5 L10 0.5 M0 6 H3.5 M9.5 6 H13 M0.5 10.5 L3.5 9.5 M12.5 10.5 L9.5 9.5 M3.5 5.5 H9.5" fill="none" stroke="#ccc" stroke-width="1"/></svg>
<svg style="left:987px;top:969px" width="10" height="13" viewBox="0 0 10 13"><path d="M0.5 0.8 L9.5 6.5 L0.5 12.2 Z" fill="none" stroke="#ccc" stroke-width="1"/></svg>
<svg style="left:1016px;top:968px" width="12" height="14" viewBox="0 0 12 14"><path d="M3 0.5 H9 M4 0.5 V5.5 L0.5 13.5 H11.5 L8 5.5 V0.5 M2 10 H10" fill="none" stroke="#ccc" stroke-width="1"/></svg>
<div class="sb" style="left:1032px">运行 CTest</div>
<div class="sb" style="left:1103px">1.65 KiB</div>
<div class="sb" style="left:1233px">[OpenOCD Server]</div>

<!-- badges -->
<div class="badge" style="left:21px;top:951px">2</div>
<div class="badge" style="left:83px;top:951px">3</div>
<div class="badge" style="left:386px;top:952px">4</div>
<div class="badge" style="left:393px;top:856px">5</div>

<!-- watermark -->
<svg style="left:0;top:0" width="1321" height="987" viewBox="0 0 1321 987">
<ellipse cx="1242.5" cy="910" rx="69.5" ry="64.5" fill="#D9001B"/>
<path d="M1221 842 A75.5 70.5 0 1 1 1205 970.5" fill="none" stroke="#D9001B" stroke-width="3.5"/>
<path d="M1206 847 L1218 840" stroke="#D9001B" stroke-width="3.5"/>
<path d="M1166 912 C1165 895 1168 880 1175 866" fill="none" stroke="#D9001B" stroke-width="1.8"/>
<path d="M1180 862 L1184 857" stroke="#D9001B" stroke-width="2"/>
<path d="M1286 962 L1300 951.5" stroke="#F0F0F0" stroke-width="1.2"/>
<text x="1243" y="922" text-anchor="middle" font-family="Liberation Sans" font-size="40" fill="#F4F4F4" fill-opacity="0.85" textLength="104" lengthAdjust="spacingAndGlyphs">nixgnauhcuy</text>
</svg>
</body></html>
